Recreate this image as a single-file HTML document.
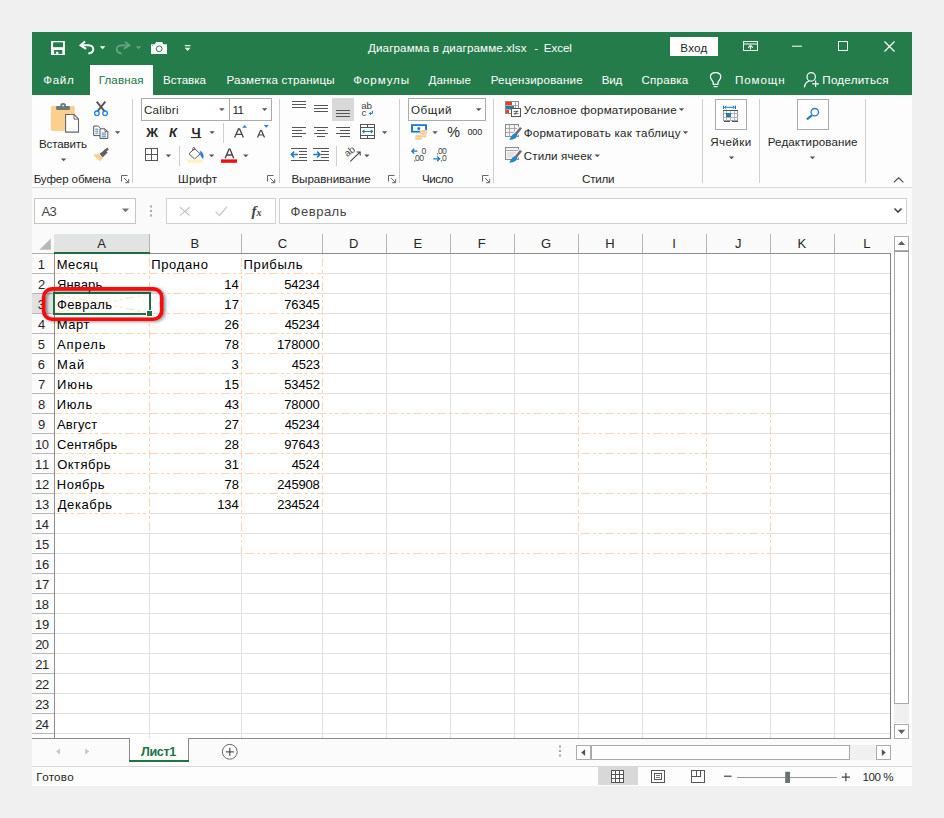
<!DOCTYPE html>
<html lang="ru">
<head>
<meta charset="utf-8">
<title>Excel</title>
<style>
*{box-sizing:border-box;margin:0;padding:0}
html,body{width:944px;height:818px;overflow:hidden;background:#f0f0f0}
body{font-family:"Liberation Sans",sans-serif;font-size:12px;color:#262626;position:relative}
.a{position:absolute;white-space:nowrap}
.t{position:absolute;white-space:nowrap;line-height:16px;height:16px}
.box{position:absolute;background:#fff;border:1px solid #c6c6c6}
</style>
</head>
<body>
<div class="a" style="left:32px;top:32px;width:880px;height:754px;background:#fff"></div>
<div class="a" style="left:32px;top:32px;width:880px;height:63px;background:#257c4b"></div>
<div class="a" style="left:90px;top:65px;width:63px;height:30px;background:#fdfdfd"></div>
<div class="a" style="left:32px;top:95px;width:880px;height:92px;background:#fdfdfd"></div>
<div class="a" style="left:32px;top:187px;width:880px;height:1px;background:#dadada"></div>
<div class="a" style="left:32px;top:188px;width:880px;height:46px;background:#fafafa"></div>
<!-- Вход button -->
<div class="a" style="left:670px;top:37px;width:48px;height:19px;background:#fff"></div>
<!-- ribbon boxes -->
<div class="box" style="left:141px;top:98px;width:89px;height:23px;border-color:#ababab"></div>
<div class="box" style="left:229px;top:98px;width:43px;height:23px;border-color:#ababab"></div>
<div class="box" style="left:408px;top:98px;width:78px;height:23px;border-color:#ababab"></div>
<div class="a" style="left:332px;top:98px;width:22px;height:23px;background:#d9d9d9"></div>
<div class="box" style="left:715px;top:99px;width:32px;height:31px;border-color:#ababab"></div>
<div class="box" style="left:797px;top:99px;width:32px;height:31px;border-color:#ababab"></div>
<!-- formula bar boxes -->
<div class="box" style="left:34px;top:198px;width:102px;height:26px;border-color:#c4c6c6"></div>
<div class="box" style="left:166px;top:198px;width:110px;height:26px;border-color:#d0d2d2"></div>
<div class="box" style="left:279px;top:198px;width:628px;height:26px;border-color:#d0d2d2"></div>
<!-- sheet area bottom -->
<div class="a" style="left:32px;top:738px;width:880px;height:27px;background:#fbfbfb"></div>
<div class="a" style="left:32px;top:765px;width:880px;height:21px;background:#fdfdfd"></div>
<svg class="a" style="left:0;top:0" width="944" height="818" viewBox="0 0 944 818" fill="none">
<rect x="32" y="234" width="880" height="20" fill="#fafafa"/>
<rect x="32" y="254" width="22" height="484" fill="#fcfcfc"/>
<rect x="54" y="234" width="96" height="18" fill="#e2e3e3"/>
<rect x="32" y="294" width="22" height="20" fill="#e1e1e1"/>
<g shape-rendering="crispEdges">
<rect x="149" y="254" width="1" height="484" fill="#e1e1e1"/>
<rect x="241" y="254" width="1" height="484" fill="#e1e1e1"/>
<rect x="322" y="254" width="1" height="484" fill="#e1e1e1"/>
<rect x="386" y="254" width="1" height="484" fill="#e1e1e1"/>
<rect x="450" y="254" width="1" height="484" fill="#e1e1e1"/>
<rect x="514" y="254" width="1" height="484" fill="#e1e1e1"/>
<rect x="578" y="254" width="1" height="484" fill="#e1e1e1"/>
<rect x="642" y="254" width="1" height="484" fill="#e1e1e1"/>
<rect x="706" y="254" width="1" height="484" fill="#e1e1e1"/>
<rect x="770" y="254" width="1" height="484" fill="#e1e1e1"/>
<rect x="834" y="254" width="1" height="484" fill="#e1e1e1"/>
<rect x="55" y="273" width="835" height="1" fill="#e1e1e1"/>
<rect x="55" y="293" width="835" height="1" fill="#e1e1e1"/>
<rect x="55" y="313" width="835" height="1" fill="#e1e1e1"/>
<rect x="55" y="333" width="835" height="1" fill="#e1e1e1"/>
<rect x="55" y="353" width="835" height="1" fill="#e1e1e1"/>
<rect x="55" y="373" width="835" height="1" fill="#e1e1e1"/>
<rect x="55" y="393" width="835" height="1" fill="#e1e1e1"/>
<rect x="55" y="413" width="835" height="1" fill="#e1e1e1"/>
<rect x="55" y="433" width="835" height="1" fill="#e1e1e1"/>
<rect x="55" y="453" width="835" height="1" fill="#e1e1e1"/>
<rect x="55" y="473" width="835" height="1" fill="#e1e1e1"/>
<rect x="55" y="493" width="835" height="1" fill="#e1e1e1"/>
<rect x="55" y="513" width="835" height="1" fill="#e1e1e1"/>
<rect x="55" y="533" width="835" height="1" fill="#e1e1e1"/>
<rect x="55" y="553" width="835" height="1" fill="#e1e1e1"/>
<rect x="55" y="573" width="835" height="1" fill="#e1e1e1"/>
<rect x="55" y="593" width="835" height="1" fill="#e1e1e1"/>
<rect x="55" y="613" width="835" height="1" fill="#e1e1e1"/>
<rect x="55" y="633" width="835" height="1" fill="#e1e1e1"/>
<rect x="55" y="653" width="835" height="1" fill="#e1e1e1"/>
<rect x="55" y="673" width="835" height="1" fill="#e1e1e1"/>
<rect x="55" y="693" width="835" height="1" fill="#e1e1e1"/>
<rect x="55" y="713" width="835" height="1" fill="#e1e1e1"/>
<rect x="55" y="733" width="835" height="1" fill="#e1e1e1"/>
<rect x="149" y="234" width="1" height="19" fill="#b4b4b4"/>
<rect x="241" y="234" width="1" height="19" fill="#b4b4b4"/>
<rect x="322" y="234" width="1" height="19" fill="#b4b4b4"/>
<rect x="386" y="234" width="1" height="19" fill="#b4b4b4"/>
<rect x="450" y="234" width="1" height="19" fill="#b4b4b4"/>
<rect x="514" y="234" width="1" height="19" fill="#b4b4b4"/>
<rect x="578" y="234" width="1" height="19" fill="#b4b4b4"/>
<rect x="642" y="234" width="1" height="19" fill="#b4b4b4"/>
<rect x="706" y="234" width="1" height="19" fill="#b4b4b4"/>
<rect x="770" y="234" width="1" height="19" fill="#b4b4b4"/>
<rect x="834" y="234" width="1" height="19" fill="#b4b4b4"/>
<rect x="32" y="273" width="22" height="1" fill="#b8b8b8"/>
<rect x="32" y="293" width="22" height="1" fill="#b8b8b8"/>
<rect x="32" y="313" width="22" height="1" fill="#b8b8b8"/>
<rect x="32" y="333" width="22" height="1" fill="#b8b8b8"/>
<rect x="32" y="353" width="22" height="1" fill="#b8b8b8"/>
<rect x="32" y="373" width="22" height="1" fill="#b8b8b8"/>
<rect x="32" y="393" width="22" height="1" fill="#b8b8b8"/>
<rect x="32" y="413" width="22" height="1" fill="#b8b8b8"/>
<rect x="32" y="433" width="22" height="1" fill="#b8b8b8"/>
<rect x="32" y="453" width="22" height="1" fill="#b8b8b8"/>
<rect x="32" y="473" width="22" height="1" fill="#b8b8b8"/>
<rect x="32" y="493" width="22" height="1" fill="#b8b8b8"/>
<rect x="32" y="513" width="22" height="1" fill="#b8b8b8"/>
<rect x="32" y="533" width="22" height="1" fill="#b8b8b8"/>
<rect x="32" y="553" width="22" height="1" fill="#b8b8b8"/>
<rect x="32" y="573" width="22" height="1" fill="#b8b8b8"/>
<rect x="32" y="593" width="22" height="1" fill="#b8b8b8"/>
<rect x="32" y="613" width="22" height="1" fill="#b8b8b8"/>
<rect x="32" y="633" width="22" height="1" fill="#b8b8b8"/>
<rect x="32" y="653" width="22" height="1" fill="#b8b8b8"/>
<rect x="32" y="673" width="22" height="1" fill="#b8b8b8"/>
<rect x="32" y="693" width="22" height="1" fill="#b8b8b8"/>
<rect x="32" y="713" width="22" height="1" fill="#b8b8b8"/>
<rect x="32" y="733" width="22" height="1" fill="#b8b8b8"/>
<rect x="54" y="253" width="837" height="1" fill="#8f8f8f"/><rect x="32" y="253" width="22" height="1" fill="#b0b0b0"/>
<rect x="54" y="254" width="1" height="484" fill="#8f8f8f"/>
<rect x="890" y="253" width="1" height="486" fill="#7f7f7f"/>
<rect x="54" y="252" width="96" height="2" fill="#1e6e42"/>
<rect x="53" y="294" width="2" height="20" fill="#1e6e42"/>
</g>
<path d="M50.8 238.6V249.8H39.4Z" fill="#b6b9b8"/>
<g fill="#fff" shape-rendering="crispEdges"><rect x="55" y="273" width="267" height="1"/><rect x="55" y="293" width="267" height="1"/><rect x="55" y="313" width="267" height="1"/><rect x="55" y="333" width="267" height="1"/><rect x="55" y="353" width="267" height="1"/><rect x="55" y="373" width="267" height="1"/><rect x="55" y="393" width="267" height="1"/><rect x="55" y="413" width="267" height="1"/><rect x="55" y="433" width="267" height="1"/><rect x="55" y="453" width="267" height="1"/><rect x="55" y="473" width="267" height="1"/><rect x="55" y="493" width="267" height="1"/><rect x="55" y="513" width="94" height="1"/><rect x="149" y="254" width="1" height="279"/><rect x="241" y="254" width="1" height="299"/><rect x="322" y="254" width="1" height="259"/><rect x="322" y="413" width="448" height="1"/><rect x="770" y="413" width="1" height="140"/><rect x="241" y="553" width="529" height="1"/><rect x="578" y="413" width="1" height="120"/><rect x="578" y="533" width="192" height="1"/><rect x="578" y="433" width="128" height="1"/><rect x="578" y="453" width="128" height="1"/><rect x="578" y="493" width="128" height="1"/><rect x="706" y="433" width="1" height="60"/></g>
<g stroke="#fcd5b4" stroke-width="1" fill="none" stroke-dasharray="9 3 3 3 3 3">
<path d="M55 273.5H322" stroke-dashoffset="2"/>
<path d="M55 293.5H322" stroke-dashoffset="2"/>
<path d="M55 313.5H322" stroke-dashoffset="2"/>
<path d="M55 333.5H322" stroke-dashoffset="2"/>
<path d="M55 353.5H322" stroke-dashoffset="2"/>
<path d="M55 373.5H322" stroke-dashoffset="2"/>
<path d="M55 393.5H322" stroke-dashoffset="2"/>
<path d="M55 413.5H322" stroke-dashoffset="2"/>
<path d="M55 433.5H322" stroke-dashoffset="2"/>
<path d="M55 453.5H322" stroke-dashoffset="2"/>
<path d="M55 473.5H322" stroke-dashoffset="2"/>
<path d="M55 493.5H322" stroke-dashoffset="2"/>
<path d="M55 513.5H149" stroke-dashoffset="2"/>
<path d="M149.5 254V533" stroke-dashoffset="20"/>
<path d="M241.5 254V553" stroke-dashoffset="20"/>
<path d="M322.5 254V513" stroke-dashoffset="20"/>
<path d="M322 413.5H770" stroke-dashoffset="5"/>
<path d="M770.5 413V553" stroke-dashoffset="11"/>
<path d="M241 553.5H770" stroke-dashoffset="20"/>
<path d="M578.5 413V533" stroke-dashoffset="11"/>
<path d="M578 533.5H770" stroke-dashoffset="21"/>
<path d="M578 433.5H706" stroke-dashoffset="21"/>
<path d="M578 453.5H706" stroke-dashoffset="21"/>
<path d="M578 493.5H706" stroke-dashoffset="21"/>
<path d="M706.5 433V493" stroke-dashoffset="7"/>
</g>
<g stroke="#fcd5b4" stroke-width="0.9" opacity="0.85" stroke-dasharray="9 3 3 3 3 3">
<path d="M55 294L149 313M55 313L149 294"/>
</g>
<!-- save -->
<rect x="51" y="41" width="14" height="14" fill="#fff"/>
<rect x="53.1" y="42.3" width="9.9" height="4.9" fill="#257c4b"/>
<rect x="54.1" y="50" width="8.2" height="3.9" fill="#257c4b"/>
<rect x="56.2" y="51.7" width="2.1" height="2.3" fill="#fff"/>
<!-- undo -->
<path d="M85 41.6L80.6 45.3L86.2 48.8" stroke="#fff" stroke-width="2" stroke-linejoin="miter"/>
<path d="M81.5 45.3H88.5C91.6 45.3 93.3 47.3 93.3 49.3C93.3 51.6 91.2 53.2 88.3 53.5" stroke="#fff" stroke-width="2"/>
<path d="M99.8 46.2H105.4L102.6 49.2Z" fill="#fff"/>
<!-- redo dim -->
<path d="M125 41.6L129.4 45.3L123.8 48.8" stroke="#6aa383" stroke-width="1.8"/>
<path d="M128.5 45.3H121.5C118.4 45.3 116.7 47.3 116.7 49.3C116.7 51.6 118.8 53.2 121.7 53.5" stroke="#6aa383" stroke-width="1.8"/>
<path d="M135.8 46.2H141.4L138.6 49.2Z" fill="#6aa383"/>
<!-- camera -->
<path d="M151 44.2H154.9L156 42H162.2L163.3 44.2H167V54H151Z" fill="#fff"/>
<circle cx="159.2" cy="48.8" r="2.9" fill="#fff" stroke="#257c4b" stroke-width="1"/>
<rect x="151.8" y="44.9" width="0.9" height="0.9" fill="#257c4b"/>
<!-- customize -->
<rect x="184.8" y="45.1" width="5.6" height="1.1" fill="#fff"/>
<path d="M184.8 47.8H190.4L187.6 51Z" fill="#fff"/>
<!-- ribbon display -->
<rect x="743.5" y="41.5" width="14" height="9" stroke="#fff" stroke-width="1"/>
<rect x="744" y="43.5" width="13" height="1" fill="#fff"/>
<path d="M750.5 49.5V45.6M748.2 47.6L750.5 45.3L752.8 47.6" stroke="#fff" stroke-width="1.1"/>
<!-- min -->
<rect x="792" y="45.7" width="10" height="1" fill="#fff"/>
<!-- max -->
<rect x="838.5" y="41.5" width="9" height="9" stroke="#fff" stroke-width="1"/>
<!-- close -->
<path d="M884.5 41.5L894.5 51.5M894.5 41.5L884.5 51.5" stroke="#fff" stroke-width="1.2"/>
<!-- bulb & share -->
<g stroke="#fff" stroke-width="1.2">
<path d="M713.2 84.3V82.6C713.2 81.2 710.4 79.6 710.4 76.8C710.4 74.2 712.6 72.6 715.6 72.6C718.6 72.6 720.8 74.2 720.8 76.8C720.8 79.6 718 81.2 718 82.6V84.3Z"/>
<path d="M713.6 86.6H717.6"/>
<circle cx="811.2" cy="76.9" r="4.2"/>
<path d="M804.4 87.4C804.9 83.6 807.2 81.5 809.4 80.9"/>
<path d="M812.3 83.8H818.9M815.6 80.5V87.1"/>
</g>

<!-- group separators -->
<g shape-rendering="crispEdges" fill="#cfcfcf">
<rect x="132" y="99" width="1" height="84"/><rect x="279" y="99" width="1" height="84"/><rect x="399" y="99" width="1" height="84"/>
<rect x="493" y="99" width="1" height="84"/><rect x="702" y="99" width="1" height="84"/><rect x="759" y="99" width="1" height="84"/><rect x="865" y="99" width="1" height="84"/>
<rect x="223" y="123" width="1" height="20"/><rect x="179" y="146" width="1" height="20"/><rect x="336" y="146" width="1" height="20"/>
</g>
<!-- dropdown arrows -->
<g fill="#555">
<path d="M60.9 158.5H66.3L63.6 161.3Z"/>
<path d="M114.9 131.2H120.3L117.6 134Z"/>
<path d="M219.2 108.2H224.6L221.9 111Z"/><path d="M261.9 108.2H267.3L264.6 111Z"/>
<path d="M209.4 131.2H214.8L212.1 134Z"/>
<path d="M165.7 154.5H171.1L168.4 157.3Z"/><path d="M208.9 154.5H214.3L211.6 157.3Z"/><path d="M243.1 154.5H248.5L245.8 157.3Z"/>
<path d="M381.9 131.2H387.3L384.6 134Z"/><path d="M364.2 154.5H369.6L366.9 157.3Z"/>
<path d="M476 108.2H481.4L478.7 111Z"/><path d="M432.3 131.2H437.7L435 134Z"/>
<path d="M678.8 108.2H684.2L681.5 111Z"/><path d="M682.8 131.2H688.2L685.5 134Z"/><path d="M594.6 154.5H600L597.3 157.3Z"/>
<path d="M728.9 156.4H734.3L731.6 159.2Z"/><path d="M809.7 156.4H815.1L812.4 159.2Z"/>
</g>
<!-- dialog launchers -->
<g stroke="#666" stroke-width="1" fill="none">
<path d="M121.5 181.5V175.5H127.5"/><path d="M124.1 178.1L128.5 182.5M128.7 179.1V182.7H125.1"/>
<path d="M267.5 181.5V175.5H273.5"/><path d="M270.1 178.1L274.5 182.5M274.7 179.1V182.7H271.1"/>
<path d="M388.5 181.5V175.5H394.5"/><path d="M391.1 178.1L395.5 182.5M395.7 179.1V182.7H392.1"/>
<path d="M482.5 181.5V175.5H488.5"/><path d="M485.1 178.1L489.5 182.5M489.7 179.1V182.7H486.1"/>
</g>
<!-- collapse chevron -->
<path d="M893.8 182.4L898.6 177.8L903.4 182.4" stroke="#444" stroke-width="1.1"/>
<!-- PASTE -->
<rect x="50.8" y="106.1" width="24" height="25" rx="1.8" fill="#fbd08e"/>
<rect x="56.1" y="106" width="13.8" height="3.9" rx="0.8" fill="#6f7874"/>
<path d="M60.4 107V105C60.4 103.8 61.5 103.1 63.1 103.1C64.7 103.1 65.9 103.8 65.9 105V107Z" fill="#6f7874"/>
<rect x="62.3" y="104.8" width="1.6" height="1.6" fill="#e9ece9"/>
<path d="M65.6 114.5H74.2L78.5 118.9V132.1H65.6Z" fill="#fff" stroke="#666" stroke-width="1.1"/>
<path d="M74 114.7V119.1H78.3" stroke="#666" stroke-width="1"/>
<!-- CUT -->
<path d="M96.7 101.6L104.6 111.4M105.3 101.6L97.4 111.4" stroke="#555" stroke-width="1.9"/>
<circle cx="96.9" cy="113.3" r="2.3" stroke="#1e86e0" stroke-width="1.3"/>
<circle cx="105.1" cy="113.3" r="2.3" stroke="#1e86e0" stroke-width="1.3"/>
<!-- COPY -->
<path d="M93.7 126H98.2L100.6 128.4V135.6H93.7Z" fill="#fff" stroke="#555" stroke-width="1"/>
<path d="M100 128.8H105L107.8 131.6V138.4H100Z" fill="#fff" stroke="#555" stroke-width="1"/>
<path d="M105 129V131.6H107.6" stroke="#555" stroke-width="0.9"/>
<path d="M95.3 129.2H98.3M95.3 131.2H98.3M95.3 133.2H98.3M101.7 133H106M101.7 134.9H106M101.7 136.8H106" stroke="#2a7ab0" stroke-width="0.9"/>
<!-- FORMAT PAINTER -->
<path d="M108.2 148.6L104.4 151.2" stroke="#666" stroke-width="2.6"/>
<path d="M105.2 149.4L99.6 153.8L102.6 157.4L107.6 152.4Z" fill="#5f6360"/>
<path d="M98.9 153.9L93.4 154.6C95.4 157.6 97.9 160 100.4 161.2L103.2 157.6Z" fill="#fbd08e"/>
<!-- FONT GROUP -->
<rect x="190.9" y="137" width="10.4" height="1.1" fill="#333"/>
<!-- grow/shrink font -->
<path d="M234.6 137.5L238.5 128.9H239.6L243.4 137.5M236.1 134.4H242" stroke="#444" stroke-width="1.3"/>
<path d="M242.3 127.7H247L244.65 125Z" fill="#2b7cd3"/>
<path d="M257.5 137.5L260.5 130.5H261.5L264.5 137.5M258.7 135H263.3" stroke="#444" stroke-width="1.2"/>
<path d="M263.8 125H268.7L266.25 127.7Z" fill="#2b7cd3"/>
<!-- borders -->
<path d="M145.5 148.5H157.5V160.5H145.5ZM151.5 148.5V160.5M145.5 154.5H157.5" stroke="#555" stroke-width="1" shape-rendering="crispEdges"/>
<!-- fill bucket -->
<path d="M194.6 148.6L200.2 153.8L194.6 159L189 153.8Z" fill="#fff" stroke="#555" stroke-width="1"/>
<path d="M192.8 151V148.2C192.8 147.2 194.8 147.2 194.8 148.2V150.2" stroke="#555" stroke-width="0.9"/>
<path d="M200.4 151C202.8 152.4 203.8 155.2 203.1 158.6C200.9 157.2 200 154.4 200.4 151Z" fill="#2b7cd3" stroke="#2b7cd3" stroke-width="0.5"/>
<rect x="187" y="159.4" width="16" height="3.4" fill="#fff3c4"/>
<!-- font color -->
<path d="M225.2 158.2L229 149.1H230L233.7 158.2M226.7 155H232.3" stroke="#444" stroke-width="1.4"/>
<rect x="221" y="159.4" width="16" height="3.4" fill="#f20d0d"/>
<!-- ALIGNMENT GROUP -->
<g stroke="#555" stroke-width="1" shape-rendering="crispEdges">
<path d="M292 101.5H306M292 104.5H306M292 107.5H306"/>
<path d="M314 105.5H328M314 108.5H328M314 111.5H328"/>
<path d="M336 110.5H350M336 113.5H350M336 116.5H350"/>
<path d="M292 127.5H306M292 130.5H302M292 133.5H306M292 136.5H302"/>
<path d="M314 127.5H328M317 130.5H325M314 133.5H328M317 136.5H325"/>
<path d="M336 127.5H350M340 130.5H350M336 133.5H350M340 136.5H350"/>
<path d="M291 148.5H307M291 160.5H307M299 151.5H307M299 154.5H307M299 157.5H307"/>
<path d="M313 148.5H329M313 160.5H329M321 151.5H329M321 154.5H329M321 157.5H329"/>
<!-- merge -->
<path d="M360.5 124.5H374.5V138.5H360.5ZM360.5 127.5H374.5M360.5 135.5H374.5M367.5 124.5V127.5M367.5 135.5V138.5"/>
</g>
<!-- indent arrows -->
<path d="M291.3 154.5H298M294.2 151.6L291.3 154.5L294.2 157.4" stroke="#1e7ab8" stroke-width="1.5"/>
<path d="M313.2 154.5H320M317.1 151.6L320 154.5L317.1 157.4" stroke="#1e7ab8" stroke-width="1.5"/>
<!-- merge arrow -->
<path d="M362.6 131.5H372.6M364.4 129.8L362.6 131.5L364.4 133.2M370.8 129.8L372.6 131.5L370.8 133.2" stroke="#1e7ab8" stroke-width="1.1"/>
<!-- wrap text -->
<text x="361.3" y="108.8" font-family="Liberation Sans" font-size="9.8" fill="#444" letter-spacing="-0.2">ab</text>
<text x="361.6" y="115.8" font-family="Liberation Sans" font-size="9.8" fill="#444">c</text>
<path d="M372.5 110.8V113.4H369.6M370.9 111.9L369.4 113.4L370.9 114.9" stroke="#1e7ab8" stroke-width="1"/>
<!-- orientation -->
<text transform="translate(347.3 157.3) rotate(-38)" font-family="Liberation Sans" font-size="9.8" fill="#444" letter-spacing="-0.2">ab</text>
<path d="M350.3 161.4L360 152.2M356.6 152H360.2V155.6" stroke="#444" stroke-width="1.1"/>
<!-- NUMBER GROUP -->
<rect x="411" y="124.2" width="16" height="8.4" fill="#1e7ad6"/>
<rect x="413" y="126" width="12" height="4.8" fill="#fff"/>
<circle cx="418.8" cy="128.4" r="1.5" fill="#1e7ad6"/>
<g fill="#f8c582" stroke="#fff" stroke-width="0.5">
<ellipse cx="423.6" cy="136" rx="3.4" ry="1.5"/><ellipse cx="423.6" cy="133.6" rx="3.4" ry="1.5"/><ellipse cx="423.6" cy="131.2" rx="3.4" ry="1.5"/>
<ellipse cx="418.6" cy="138.4" rx="3.8" ry="1.5"/><ellipse cx="418.6" cy="136.2" rx="3.8" ry="1.5"/>
</g>
<!-- inc decimal -->
<path d="M411.8 151.2H417.4M414.3 148.8L411.8 151.2L414.3 153.6" stroke="#1e7ab8" stroke-width="1.3"/>
<g font-family="Liberation Sans" font-size="8.6" fill="#444" letter-spacing="-0.7">
<text x="421.4" y="154.4">0</text><text x="413.4" y="161.2">,00</text>
<text x="436.2" y="154.4">,00</text><text x="440.2" y="161.2">,0</text>
</g>
<path d="M433.2 158.8H439.6M437.1 156.4L439.6 158.8L437.1 161.2" stroke="#1e7ab8" stroke-width="1.3"/>
<!-- STYLES ICONS -->
<!-- conditional formatting -->
<g shape-rendering="crispEdges">
<rect x="505.5" y="101.5" width="13" height="12" fill="#fff" stroke="#8a8a8a" stroke-width="1"/>
<path d="M505.5 105.5H518.5M505.5 109.5H518.5M511.5 101.5V113.5M515.5 101.5V113.5" stroke="#a8a8a8" stroke-width="1"/>
<rect x="506" y="102" width="6" height="3" fill="#f03c14"/>
<rect x="506" y="106" width="8" height="3" fill="#2a7ab0"/>
<rect x="506" y="110" width="3" height="3" fill="#f03c14"/>
<rect x="511.5" y="108.5" width="9" height="8" fill="#fff" stroke="#555" stroke-width="1"/>
</g>
<path d="M513.6 111.6H518.4M513.6 113.6H518.4M517.2 110.4L514.8 114.8" stroke="#444" stroke-width="0.8"/>
<!-- format as table -->
<g shape-rendering="crispEdges">
<rect x="505.5" y="124.5" width="13" height="12" fill="#f4f4f4" stroke="#8a8a8a" stroke-width="1"/>
<path d="M505.5 128.5H518.5M505.5 132.5H518.5M509.5 124.5V136.5M514.5 124.5V136.5" stroke="#a8a8a8" stroke-width="1"/>
<rect x="505.5" y="147.5" width="13" height="12" fill="#f4f4f4" stroke="#8a8a8a" stroke-width="1"/>
<path d="M505.5 150.5H518.5" stroke="#a8a8a8" stroke-width="1"/>
<rect x="507" y="152" width="10" height="6" fill="#e2e2e2"/>
</g>
<g id="brush1">
<path d="M521.4 127.4L514.6 135.4" stroke="#fdfdfd" stroke-width="5"/>
<path d="M521 127.8L515.6 134.4" stroke="#6e6e6e" stroke-width="2.6"/>
<path d="M515.4 133.2C512.6 133.4 511.6 136 509.2 139.7C513.4 139.9 516.8 138.4 517.4 135Z" fill="#2487c6"/>
</g>
<g transform="translate(0 22.8)">
<path d="M521.4 127.4L514.6 135.4" stroke="#fdfdfd" stroke-width="5"/>
<path d="M521 127.8L515.6 134.4" stroke="#6e6e6e" stroke-width="2.6"/>
<path d="M515.4 133.2C512.6 133.4 511.6 136 509.2 139.7C513.4 139.9 516.8 138.4 517.4 135Z" fill="#2487c6"/>
</g>
<!-- CELLS ICON -->
<path d="M723.5 105.6V109M735.5 105.6V109M724.5 107.3H734.5M726.3 105.8L724.6 107.3L726.3 108.8M732.7 105.8L734.4 107.3L732.7 108.8" stroke="#1e7ab8" stroke-width="1"/>
<g shape-rendering="crispEdges">
<rect x="723.5" y="110.5" width="14" height="10" fill="#fff" stroke="#9a9a9a" stroke-width="1"/>
<path d="M723.5 113.5H737.5M723.5 117.5H737.5M726.5 110.5V120.5M730.5 110.5V120.5M734.5 110.5V120.5" stroke="#b5b5b5" stroke-width="1"/>
<rect x="723" y="110" width="15" height="1" fill="#555"/>
<rect x="726" y="113" width="5" height="4" fill="#1e7ab8"/>
<path d="M723.5 121.5H729.5M731.5 121.5H737.5" stroke="#555" stroke-width="1"/>
</g>
<!-- EDITING ICON -->
<circle cx="814.8" cy="112.2" r="3.7" stroke="#2a7ab9" stroke-width="1.3" fill="#fff"/>
<path d="M811.9 115.3L806.9 119.3" stroke="#2a7ab9" stroke-width="2.2"/>

<!-- FORMULA BAR ICONS -->
<path d="M121.8 208.4H129.2L125.5 212.2Z" fill="#777"/>
<g fill="#a6a6a6"><rect x="150" y="205.5" width="2" height="2"/><rect x="150" y="210" width="2" height="2"/><rect x="150" y="214.5" width="2" height="2"/></g>
<path d="M180 207.2L189.8 215.6M189.8 207.2L180 215.6" stroke="#c4c4c4" stroke-width="1.2"/>
<path d="M215.6 211.8L219.6 215.4L227 206.6" stroke="#cacaca" stroke-width="1.4"/>
<text x="251.6" y="215.6" font-family="Liberation Serif" font-style="italic" font-weight="bold" font-size="15" fill="#444">f</text>
<text x="256.6" y="215.8" font-family="Liberation Serif" font-style="italic" font-weight="bold" font-size="10" fill="#444">x</text>
<path d="M894.5 208.5L898 212L901.5 208.5" stroke="#444" stroke-width="1.6"/>
<!-- VERTICAL SCROLLBAR -->
<g shape-rendering="crispEdges">
<rect x="894.5" y="236.5" width="14" height="14" fill="#fff" stroke="#ababab"/>
<rect x="894.5" y="251.5" width="14" height="452" fill="#fff" stroke="#ababab"/>
<rect x="894" y="251" width="15" height="1" fill="#9a9a9a"/>
<rect x="894" y="704" width="15" height="19" fill="#f0f0f0"/>
<rect x="894.5" y="724.5" width="14" height="14" fill="#fff" stroke="#ababab"/>
</g>
<path d="M897.8 245.1H905.2L901.5 240.9Z" fill="#606060"/>
<path d="M897.8 729.8H905.2L901.5 734Z" fill="#606060"/>
<!-- SHEET TAB BAR -->
<g shape-rendering="crispEdges">
<rect x="32" y="738" width="98" height="1" fill="#8a8a8a"/>
<rect x="188" y="738" width="703" height="1" fill="#8a8a8a"/>
<rect x="130" y="738" width="58" height="22" fill="#fff"/>
<rect x="129" y="738" width="1" height="23" fill="#8a8a8a"/>
<rect x="188" y="738" width="1" height="23" fill="#8a8a8a"/>
<rect x="129" y="760" width="60" height="2" fill="#217346"/>
<rect x="32" y="766" width="880" height="1" fill="#d6d6d6"/>
</g>
<path d="M60 748.4V754.6L56 751.5Z" fill="#c6c6c6"/>
<path d="M85.2 748.4V754.6L89.2 751.5Z" fill="#c6c6c6"/>
<circle cx="229.8" cy="751.8" r="7.4" stroke="#666" stroke-width="1" fill="#fff"/>
<path d="M225.8 751.8H233.8M229.8 747.8V755.8" stroke="#555" stroke-width="1.3"/>
<g fill="#a6a6a6"><rect x="559" y="745.5" width="2" height="2"/><rect x="559" y="750" width="2" height="2"/><rect x="559" y="754.5" width="2" height="2"/></g>
<!-- HSCROLL -->
<g shape-rendering="crispEdges">
<rect x="576.5" y="745.5" width="14" height="14" fill="#fff" stroke="#ababab"/>
<rect x="591.5" y="745.5" width="258" height="14" fill="#fff" stroke="#ababab"/>
<rect x="850" y="745" width="26" height="15" fill="#f0f0f0"/>
<rect x="876.5" y="745.5" width="14" height="14" fill="#fff" stroke="#ababab"/>
</g>
<path d="M585.2 749.2V756L581.2 752.6Z" fill="#555"/>
<path d="M881.8 749.2V756L885.8 752.6Z" fill="#555"/>
<!-- STATUS BAR -->
<rect x="598" y="767" width="40" height="18" fill="#d8d8d8"/>
<g shape-rendering="crispEdges" stroke="#555" fill="none">
<rect x="611.5" y="770.5" width="12" height="12" fill="#fff" stroke-width="1"/>
<path d="M611.5 774.5H623.5M611.5 778.5H623.5M615.5 770.5V782.5M619.5 770.5V782.5" stroke-width="1"/>
<rect x="651.5" y="770.5" width="13" height="12" stroke-width="1"/>
<rect x="654.5" y="773.5" width="7" height="6" stroke-width="1"/>
<path d="M656 775.5H660M656 777.5H660" stroke-width="1" stroke="#777"/>
<rect x="691.5" y="770.5" width="13" height="12" stroke-width="1"/>
<path d="M691.5 776.5H700.5V770.5M696.5 770.5V776.5" stroke-width="1"/>
</g>
<rect x="724" y="775.6" width="7.6" height="1.2" fill="#444"/>
<rect x="737" y="777" width="100" height="1" fill="#9a9a9a" shape-rendering="crispEdges"/>
<rect x="785.2" y="771.8" width="4.8" height="11.2" fill="#6b7070"/>
<path d="M841.8 777.2H850M845.9 773.1V781.3" stroke="#444" stroke-width="1.2"/>

</svg>
<div class="t" style="left:368.01px;top:40px;font-size:11.6px;letter-spacing:0.131px;color:#fff;">Диаграмма&nbsp;в&nbsp;диаграмме.xlsx</div>
<div class="t" style="left:534.16px;top:40px;font-size:11.6px;letter-spacing:0.000px;color:#fff;">-</div>
<div class="t" style="left:543.85px;top:40px;font-size:11.6px;letter-spacing:-0.095px;color:#fff;">Excel</div>
<div class="t" style="left:680.35px;top:40px;font-size:11.6px;letter-spacing:0.230px;color:#262626;">Вход</div>
<div class="t" style="left:43.16px;top:72px;font-size:11.6px;letter-spacing:0.712px;color:#fff;">Файл</div>
<div class="t" style="left:98.75px;top:72px;font-size:11.6px;letter-spacing:0.106px;color:#217346;">Главная</div>
<div class="t" style="left:163.05px;top:72px;font-size:11.6px;letter-spacing:-0.025px;color:#fff;">Вставка</div>
<div class="t" style="left:226.45px;top:72px;font-size:11.6px;letter-spacing:0.186px;color:#fff;">Разметка&nbsp;страницы</div>
<div class="t" style="left:353.27px;top:72px;font-size:11.6px;letter-spacing:0.900px;color:#fff;">Формулы</div>
<div class="t" style="left:428.51px;top:72px;font-size:11.6px;letter-spacing:0.121px;color:#fff;">Данные</div>
<div class="t" style="left:490.65px;top:72px;font-size:11.6px;letter-spacing:0.198px;color:#fff;">Рецензирование</div>
<div class="t" style="left:601.65px;top:72px;font-size:11.6px;letter-spacing:-0.120px;color:#fff;">Вид</div>
<div class="t" style="left:641.56px;top:72px;font-size:11.6px;letter-spacing:0.198px;color:#fff;">Справка</div>
<div class="t" style="left:735.01px;top:72px;font-size:11.6px;letter-spacing:0.900px;color:#fff;">Помощн</div>
<div class="t" style="left:822.36px;top:72px;font-size:11.6px;letter-spacing:0.235px;color:#fff;">Поделиться</div>
<div class="t" style="left:39.05px;top:136px;font-size:11.6px;letter-spacing:-0.169px;color:#262626;">Вставить</div>
<div class="t" style="left:33.65px;top:171px;font-size:11.6px;letter-spacing:-0.124px;color:#262626;">Буфер&nbsp;обмена</div>
<div class="t" style="left:143.96px;top:102px;font-size:11.6px;letter-spacing:0.283px;color:#262626;">Calibri</div>
<div class="t" style="left:232.60px;top:102px;font-size:11.6px;letter-spacing:-0.700px;color:#262626;">11</div>
<div class="t" style="left:146.36px;top:125px;font-size:13px;letter-spacing:0.000px;color:#262626;font-weight:bold;">Ж</div>
<div class="t" style="left:168.91px;top:125px;font-size:13px;letter-spacing:0.000px;color:#262626;font-style:italic;font-weight:bold;">К</div>
<div class="t" style="left:191.62px;top:125px;font-size:13px;letter-spacing:0.000px;color:#262626;font-weight:bold;">Ч</div>
<div class="t" style="left:178.05px;top:171px;font-size:11.6px;letter-spacing:0.230px;color:#262626;">Шрифт</div>
<div class="t" style="left:291.45px;top:171px;font-size:11.6px;letter-spacing:-0.054px;color:#262626;">Выравнивание</div>
<div class="t" style="left:411.00px;top:102px;font-size:11.6px;letter-spacing:0.596px;color:#262626;">Общий</div>
<div class="t" style="left:447.18px;top:124px;font-size:14.3px;letter-spacing:0.000px;color:#262626;">%</div>
<div class="t" style="left:467.38px;top:124px;font-size:9px;letter-spacing:-0.030px;color:#262626;">000</div>
<div class="t" style="left:422.09px;top:171px;font-size:11.6px;letter-spacing:-0.518px;color:#262626;">Число</div>
<div class="t" style="left:523.77px;top:102px;font-size:11.6px;letter-spacing:0.252px;color:#262626;">Условное&nbsp;форматирование</div>
<div class="t" style="left:523.66px;top:125px;font-size:11.6px;letter-spacing:0.249px;color:#262626;">Форматировать&nbsp;как&nbsp;таблицу</div>
<div class="t" style="left:523.76px;top:148px;font-size:11.6px;letter-spacing:0.110px;color:#262626;">Стили&nbsp;ячеек</div>
<div class="t" style="left:582.06px;top:171px;font-size:11.6px;letter-spacing:-0.253px;color:#262626;">Стили</div>
<div class="t" style="left:710.33px;top:134px;font-size:11.6px;letter-spacing:0.379px;color:#262626;">Ячейки</div>
<div class="t" style="left:767.75px;top:134px;font-size:11.6px;letter-spacing:0.109px;color:#262626;">Редактирование</div>
<div class="t" style="left:41.60px;top:204px;font-size:13px;letter-spacing:-0.700px;color:#444;">A3</div>
<div class="t" style="left:290.62px;top:204px;font-size:13px;letter-spacing:0.507px;color:#444;">Февраль</div>
<div class="t" style="left:141.12px;top:744px;font-size:12.6px;letter-spacing:-0.430px;color:#217346;font-weight:bold;">Лист1</div>
<div class="t" style="left:36.35px;top:769px;font-size:11.6px;letter-spacing:0.301px;color:#262626;">Готово</div>
<div class="t" style="left:862.38px;top:769px;font-size:11.6px;letter-spacing:-0.410px;color:#262626;">100&nbsp;%</div>
<div class="t" style="left:97.36px;top:236px;font-size:13px;letter-spacing:0.000px;color:#262626;">A</div>
<div class="t" style="left:190.61px;top:236px;font-size:13px;letter-spacing:0.000px;color:#262626;">B</div>
<div class="t" style="left:277.76px;top:236px;font-size:13px;letter-spacing:0.000px;color:#262626;">C</div>
<div class="t" style="left:348.91px;top:236px;font-size:13px;letter-spacing:0.000px;color:#262626;">D</div>
<div class="t" style="left:413.41px;top:236px;font-size:13px;letter-spacing:0.000px;color:#262626;">E</div>
<div class="t" style="left:477.75px;top:236px;font-size:13px;letter-spacing:0.000px;color:#262626;">F</div>
<div class="t" style="left:541.08px;top:236px;font-size:13px;letter-spacing:0.000px;color:#262626;">G</div>
<div class="t" style="left:605.30px;top:236px;font-size:13px;letter-spacing:0.000px;color:#262626;">H</div>
<div class="t" style="left:672.19px;top:236px;font-size:13px;letter-spacing:0.000px;color:#262626;">I</div>
<div class="t" style="left:734.95px;top:236px;font-size:13px;letter-spacing:0.000px;color:#262626;">J</div>
<div class="t" style="left:797.39px;top:236px;font-size:13px;letter-spacing:0.000px;color:#262626;">K</div>
<div class="t" style="left:863.37px;top:236px;font-size:13px;letter-spacing:0.000px;color:#262626;">L</div>
<div class="t" style="left:56.72px;top:257px;font-size:13px;letter-spacing:0.427px;color:#000;">Месяц</div>
<div class="t" style="left:56.91px;top:277px;font-size:13px;letter-spacing:0.162px;color:#000;">Январь</div>
<div class="t" style="left:57.02px;top:297px;font-size:13px;letter-spacing:0.373px;color:#000;">Февраль</div>
<div class="t" style="left:56.72px;top:317px;font-size:13px;letter-spacing:0.552px;color:#000;">Март</div>
<div class="t" style="left:57.05px;top:337px;font-size:13px;letter-spacing:0.893px;color:#000;">Апрель</div>
<div class="t" style="left:56.91px;top:357px;font-size:13px;letter-spacing:0.900px;color:#000;">Май</div>
<div class="t" style="left:57.02px;top:377px;font-size:13px;letter-spacing:0.900px;color:#000;">Июнь</div>
<div class="t" style="left:56.72px;top:397px;font-size:13px;letter-spacing:0.782px;color:#000;">Июль</div>
<div class="t" style="left:56.95px;top:417px;font-size:13px;letter-spacing:0.227px;color:#000;">Август</div>
<div class="t" style="left:57.10px;top:437px;font-size:13px;letter-spacing:0.267px;color:#000;">Сентябрь</div>
<div class="t" style="left:57.15px;top:457px;font-size:13px;letter-spacing:0.503px;color:#000;">Октябрь</div>
<div class="t" style="left:56.72px;top:477px;font-size:13px;letter-spacing:0.538px;color:#000;">Ноябрь</div>
<div class="t" style="left:57.69px;top:497px;font-size:13px;letter-spacing:0.611px;color:#000;">Декабрь</div>
<div class="t" style="left:151.14px;top:257px;font-size:13px;letter-spacing:0.668px;color:#000;">Продано</div>
<div class="t" style="left:243.44px;top:257px;font-size:13px;letter-spacing:0.695px;color:#000;">Прибыль</div>
<div class="t" style="left:224.16px;top:277px;font-size:13px;letter-spacing:0.150px;color:#000;">14</div>
<div class="t" style="left:284.15px;top:277px;font-size:13px;letter-spacing:-0.169px;color:#000;">54234</div>
<div class="t" style="left:224.16px;top:297px;font-size:13px;letter-spacing:0.436px;color:#000;">17</div>
<div class="t" style="left:284.28px;top:297px;font-size:13px;letter-spacing:-0.142px;color:#000;">76345</div>
<div class="t" style="left:224.47px;top:317px;font-size:13px;letter-spacing:0.131px;color:#000;">26</div>
<div class="t" style="left:284.64px;top:317px;font-size:13px;letter-spacing:-0.290px;color:#000;">45234</div>
<div class="t" style="left:224.47px;top:337px;font-size:13px;letter-spacing:0.084px;color:#000;">78</div>
<div class="t" style="left:276.94px;top:337px;font-size:13px;letter-spacing:-0.111px;color:#000;">178000</div>
<div class="t" style="left:231.62px;top:357px;font-size:13px;letter-spacing:0.000px;color:#000;">3</div>
<div class="t" style="left:291.67px;top:357px;font-size:13px;letter-spacing:-0.238px;color:#000;">4523</div>
<div class="t" style="left:224.16px;top:377px;font-size:13px;letter-spacing:0.409px;color:#000;">15</div>
<div class="t" style="left:284.15px;top:377px;font-size:13px;letter-spacing:-0.105px;color:#000;">53452</div>
<div class="t" style="left:224.83px;top:397px;font-size:13px;letter-spacing:-0.258px;color:#000;">43</div>
<div class="t" style="left:284.28px;top:397px;font-size:13px;letter-spacing:-0.162px;color:#000;">78000</div>
<div class="t" style="left:224.47px;top:417px;font-size:13px;letter-spacing:0.127px;color:#000;">27</div>
<div class="t" style="left:284.64px;top:417px;font-size:13px;letter-spacing:-0.290px;color:#000;">45234</div>
<div class="t" style="left:224.47px;top:437px;font-size:13px;letter-spacing:0.084px;color:#000;">28</div>
<div class="t" style="left:284.26px;top:437px;font-size:13px;letter-spacing:-0.138px;color:#000;">97643</div>
<div class="t" style="left:224.39px;top:457px;font-size:13px;letter-spacing:0.185px;color:#000;">31</div>
<div class="t" style="left:291.67px;top:457px;font-size:13px;letter-spacing:-0.316px;color:#000;">4524</div>
<div class="t" style="left:224.47px;top:477px;font-size:13px;letter-spacing:0.084px;color:#000;">78</div>
<div class="t" style="left:277.25px;top:477px;font-size:13px;letter-spacing:-0.159px;color:#000;">245908</div>
<div class="t" style="left:217.13px;top:497px;font-size:13px;letter-spacing:-0.033px;color:#000;">134</div>
<div class="t" style="left:277.25px;top:497px;font-size:13px;letter-spacing:-0.208px;color:#000;">234524</div>
<div class="t" style="left:37.72px;top:257px;font-size:13px;letter-spacing:0.000px;color:#262626;">1</div>
<div class="t" style="left:37.88px;top:277px;font-size:13px;letter-spacing:0.000px;color:#262626;">2</div>
<div class="t" style="left:37.83px;top:297px;font-size:13px;letter-spacing:0.000px;color:#262626;">3</div>
<div class="t" style="left:37.93px;top:317px;font-size:13px;letter-spacing:0.000px;color:#262626;">4</div>
<div class="t" style="left:37.81px;top:337px;font-size:13px;letter-spacing:0.000px;color:#262626;">5</div>
<div class="t" style="left:37.87px;top:357px;font-size:13px;letter-spacing:0.000px;color:#262626;">6</div>
<div class="t" style="left:37.88px;top:377px;font-size:13px;letter-spacing:0.000px;color:#262626;">7</div>
<div class="t" style="left:37.89px;top:397px;font-size:13px;letter-spacing:0.000px;color:#262626;">8</div>
<div class="t" style="left:37.88px;top:417px;font-size:13px;letter-spacing:0.000px;color:#262626;">9</div>
<div class="t" style="left:34.92px;top:437px;font-size:13px;letter-spacing:-0.337px;color:#262626;">10</div>
<div class="t" style="left:34.92px;top:457px;font-size:13px;letter-spacing:0.761px;color:#262626;">11</div>
<div class="t" style="left:34.92px;top:477px;font-size:13px;letter-spacing:-0.224px;color:#262626;">12</div>
<div class="t" style="left:34.92px;top:497px;font-size:13px;letter-spacing:-0.247px;color:#262626;">13</div>
<div class="t" style="left:34.92px;top:517px;font-size:13px;letter-spacing:-0.510px;color:#262626;">14</div>
<div class="t" style="left:34.92px;top:537px;font-size:13px;letter-spacing:-0.251px;color:#262626;">15</div>
<div class="t" style="left:34.92px;top:557px;font-size:13px;letter-spacing:-0.220px;color:#262626;">16</div>
<div class="t" style="left:34.92px;top:577px;font-size:13px;letter-spacing:-0.224px;color:#262626;">17</div>
<div class="t" style="left:34.92px;top:597px;font-size:13px;letter-spacing:-0.267px;color:#262626;">18</div>
<div class="t" style="left:34.92px;top:617px;font-size:13px;letter-spacing:-0.216px;color:#262626;">19</div>
<div class="t" style="left:35.23px;top:637px;font-size:13px;letter-spacing:-0.647px;color:#262626;">20</div>
<div class="t" style="left:35.23px;top:657px;font-size:13px;letter-spacing:-0.549px;color:#262626;">21</div>
<div class="t" style="left:35.23px;top:677px;font-size:13px;letter-spacing:-0.533px;color:#262626;">22</div>
<div class="t" style="left:35.23px;top:697px;font-size:13px;letter-spacing:-0.557px;color:#262626;">23</div>
<div class="t" style="left:35.17px;top:717px;font-size:13px;letter-spacing:-0.700px;color:#262626;">24</div>
<div class="a" style="left:53px;top:292px;width:98px;height:23px;border:2px solid #1e6e42"></div>
<div class="a" style="left:146px;top:310px;width:7px;height:7px;background:#fff"></div>
<div class="a" style="left:147px;top:311px;width:5px;height:5px;background:#1e6e42"></div>
<svg class="a" style="left:30px;top:276px;filter:drop-shadow(2px 1.6px 1.4px rgba(0,0,0,.42))" width="150" height="60" viewBox="30 276 150 60" fill="none"><rect x="43.6" y="288.85" width="118.1" height="30.4" rx="8.4" ry="8.4" stroke="#fa0a0a" stroke-width="3.7"/></svg>

</body>
</html>
